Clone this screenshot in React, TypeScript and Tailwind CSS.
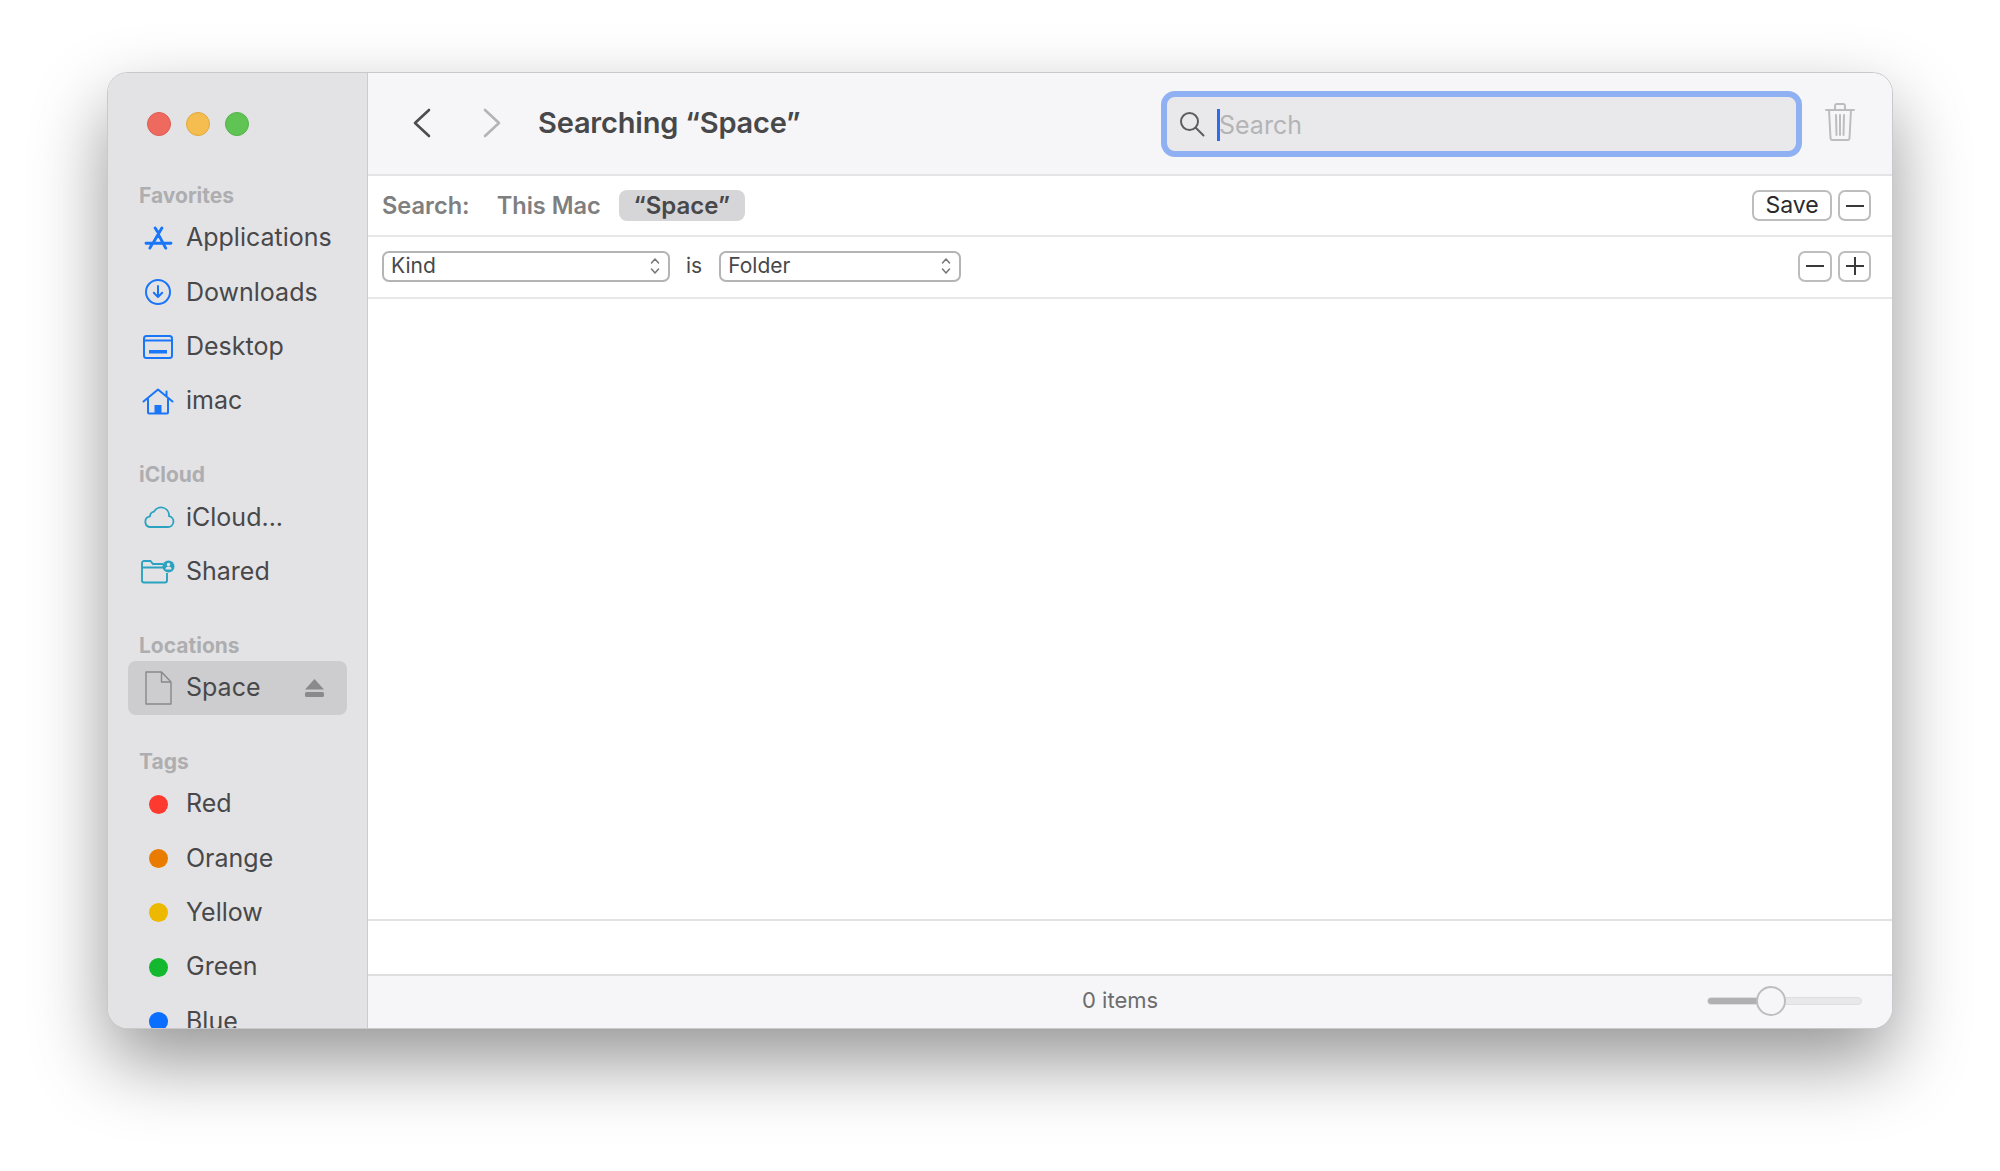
import { ReactNode } from 'react';

const font = { fontFamily: 'Inter, "Liberation Sans", sans-serif' };

function AppsIcon() {
  return (
    <svg width="29" height="25" viewBox="0 0 30 26" fill="none" stroke="#1a76f8" strokeWidth="3" strokeLinecap="round">
      <path d="M11.5 2l2.5 4M18.5 2L9.5 17.5M15 9l7.5 14M6 23l2-3.5M2 18h26" />
    </svg>
  );
}

function DownloadIcon() {
  return (
    <svg width="28" height="28" viewBox="0 0 28 28" fill="none" stroke="#1a76f8" strokeWidth="2" strokeLinecap="round" strokeLinejoin="round">
      <circle cx="14" cy="14" r="12" />
      <path d="M14 8v11M9.8 14.8L14 19l4.2-4.2" />
    </svg>
  );
}

function DesktopIcon() {
  return (
    <svg width="30" height="24" viewBox="0 0 30 24" fill="none">
      <rect x="1" y="1" width="28" height="22" rx="2.5" stroke="#1a76f8" strokeWidth="2" />
      <path d="M1 5.5h28" stroke="#1a76f8" strokeWidth="2" />
      <rect x="6" y="15" width="18" height="3.5" fill="#1a76f8" />
    </svg>
  );
}

function HomeIcon() {
  return (
    <svg width="32" height="27" viewBox="0 0 32 27" fill="none" stroke="#1a76f8" strokeWidth="2" strokeLinecap="round" strokeLinejoin="round">
      <path d="M1.5 13.5L16 1.5l14.5 12M24.5 8.5V3.5M6 11v13.5a1 1 0 001 1h18a1 1 0 001-1V11" />
      <rect x="12.5" y="17" width="7" height="8.5" fill="#1a76f8" stroke="none" />
    </svg>
  );
}

function CloudIcon() {
  return (
    <svg width="33" height="22" viewBox="0 0 33 22" fill="none" stroke="#2ba3c0" strokeWidth="1.8" strokeLinejoin="round">
      <path d="M7.5 21h18.5a5.5 5.5 0 001-10.9A8 8 0 0012 5.6 5 5 0 008 10.4 5.4 5.4 0 007.5 21z" />
    </svg>
  );
}

function SharedIcon() {
  return (
    <svg width="36" height="24" viewBox="0 0 36 24" fill="none">
      <path d="M2 6V3a2 2 0 012-2h6.5l2.5 3h10M2 7.5h22M2 6v14.5a2 2 0 002 2h21a2 2 0 002-2V13" stroke="#2ba3c0" strokeWidth="1.9" />
      <circle cx="28.5" cy="6.5" r="6" fill="#2ba3c0" />
      <circle cx="28.5" cy="4.5" r="1.7" fill="#e3e3e5" />
      <path d="M25.5 9.5a3 3 0 016 0z" fill="#e3e3e5" />
    </svg>
  );
}

function DocIcon() {
  return (
    <svg width="27" height="34" viewBox="0 0 27 34" fill="#cdcdcf" stroke="#88888a" strokeWidth="1.4" strokeLinejoin="round">
      <path d="M1 1h15.5L26 11v22H1z" />
      <path d="M16.5 1v10H26" fill="none" />
    </svg>
  );
}

function EjectIcon() {
  return (
    <svg width="19" height="18" viewBox="0 0 19 18" fill="#8a8a8c">
      <path d="M9.5 0L19 10.5H0z" />
      <rect y="13" width="19" height="5" rx="1.5" />
    </svg>
  );
}

function Dot({ color }: { color: string }) {
  return <span className={`block w-[19px] h-[19px] rounded-full ${color}`} />;
}

function Row({ icon, label, selected, trailing }: { icon: ReactNode; label: string; selected?: boolean; trailing?: ReactNode }) {
  return (
    <div className={`h-[54.3px] flex items-center rounded-[8px] mx-[20px] ${selected ? 'bg-[#cdcdcf]' : ''}`}>
      <span className="w-[60px] -mr-[2px] flex justify-center shrink-0">{icon}</span>
      <span className="text-[25px] text-[#48484a]">{label}</span>
      {trailing && <span className="ml-auto mr-[23px] flex">{trailing}</span>}
    </div>
  );
}

function Section({ title, children }: { title: string; children: ReactNode }) {
  return (
    <div>
      <div className="h-[24px] leading-[24px] pl-[31px] mb-[3px] text-[21px] font-bold text-[#aeaeb0]">{title}</div>
      {children}
    </div>
  );
}

function Sidebar() {
  return (
    <aside className="w-[260px] shrink-0 h-full overflow-hidden bg-[#e3e3e5] border-r border-[#cbcbcd]">
      <div className="flex items-center gap-[15px] pl-[39px] pt-[39px]">
        <span className="block w-[24px] h-[24px] rounded-full bg-[#ee695e] border border-[#dd5d53]" />
        <span className="block w-[24px] h-[24px] rounded-full bg-[#f5bd4f] border border-[#dfa93f]" />
        <span className="block w-[24px] h-[24px] rounded-full bg-[#5fc454] border border-[#52b348]" />
      </div>
      <div className="mt-[48px] flex flex-col gap-[35px]">
        <Section title="Favorites">
          <Row icon={<AppsIcon />} label="Applications" />
          <Row icon={<DownloadIcon />} label="Downloads" />
          <Row icon={<DesktopIcon />} label="Desktop" />
          <Row icon={<HomeIcon />} label="imac" />
        </Section>
        <Section title="iCloud">
          <Row icon={<CloudIcon />} label="iCloud..." />
          <Row icon={<SharedIcon />} label="Shared" />
        </Section>
        <Section title="Locations">
          <Row icon={<DocIcon />} label="Space" selected trailing={<EjectIcon />} />
        </Section>
        <Section title="Tags">
          <Row icon={<Dot color="bg-[#fc3a30]" />} label="Red" />
          <Row icon={<Dot color="bg-[#e97c00]" />} label="Orange" />
          <Row icon={<Dot color="bg-[#ecb800]" />} label="Yellow" />
          <Row icon={<Dot color="bg-[#14b82e]" />} label="Green" />
          <Row icon={<Dot color="bg-[#0a6eff]" />} label="Blue" />
        </Section>
      </div>
    </aside>
  );
}

function Toolbar() {
  return (
    <div className="h-[103px] shrink-0 flex items-center bg-[#f6f6f8] border-b-2 border-[#e4e4e6]">
      <svg className="ml-[44px] mb-[2px]" width="20" height="30" viewBox="0 0 20 30" fill="none" stroke="#4d4d4f" strokeWidth="2.6" strokeLinecap="round" strokeLinejoin="round">
        <path d="M17 2L3 15l14 13" />
      </svg>
      <svg className="ml-[50px] mb-[2px]" width="20" height="30" viewBox="0 0 20 30" fill="none" stroke="#b4b4b6" strokeWidth="2.6" strokeLinecap="round" strokeLinejoin="round">
        <path d="M3 2l14 13L3 28" />
      </svg>
      <h1 className="ml-[36px] mb-[1px] text-[29px] font-semibold text-[#48484a] tracking-[-0.2px]">Searching “Space”</h1>
      <div className="ml-auto w-[641px] h-[66px] rounded-[14px] border-[6px] border-[#8fb0f3] bg-[#e9e9eb] flex items-center">
        <svg className="ml-[12px] mt-[1px]" width="26" height="26" viewBox="0 0 26 26" fill="none" stroke="#5d5d5f" strokeWidth="2" strokeLinecap="round">
          <circle cx="10.5" cy="10.5" r="8.5" />
          <path d="M17 17l7.5 7.5" />
        </svg>
        <span className="ml-[12px] mt-[3px] w-[3px] h-[32px] bg-[#2f6bf0]" />
        <span className="-ml-[1px] mt-[5px] text-[25px] text-[#b4b4b6]">Search</span>
      </div>
      <svg className="ml-[23px] mr-[37px] mb-[4px]" width="30" height="38" viewBox="0 0 30 38" fill="none" stroke="#bdbdbf" strokeWidth="2" strokeLinejoin="round" strokeLinecap="round">
        <path d="M1 7h28M10 7V3a2 2 0 012-2h6a2 2 0 012 2v4M4 7l1.5 28a2 2 0 002 2h15a2 2 0 002-2L26 7M11 12l.5 20M15 12v20M19 12l-.5 20" />
      </svg>
    </div>
  );
}

function SmallBtn({ children, w }: { children: ReactNode; w: string }) {
  return (
    <button className={`${w} h-[31px] flex items-center justify-center bg-white rounded-[7px] border-2 border-[#bdbdbf] text-[23px] text-[#2a2a2c]`}>
      {children}
    </button>
  );
}

function Minus() {
  return <span className="block w-[18px] h-[2px] bg-[#3a3a3c]" />;
}

function Plus() {
  return (
    <svg width="20" height="20" viewBox="0 0 20 20" stroke="#3a3a3c" strokeWidth="2">
      <path d="M10 1v18M1 10h18" />
    </svg>
  );
}

function Stepper() {
  return (
    <svg className="ml-auto mr-[8px]" width="10" height="18" viewBox="0 0 10 18" fill="none" stroke="#77777a" strokeWidth="1.5" strokeLinecap="round" strokeLinejoin="round">
      <path d="M1.5 6L5 2l3.5 4M1.5 12L5 16l3.5-4" />
    </svg>
  );
}

function Select({ label, w }: { label: string; w: string }) {
  return (
    <div className={`${w} h-[31px] flex items-center rounded-[7px] border-2 border-[#b4b4b6] bg-white pl-[7px] text-[21px] text-[#48484a]`}>
      {label}
      <Stepper />
    </div>
  );
}

function SearchBar() {
  return (
    <div className="h-[61px] shrink-0 flex items-center pl-[14px] pr-[21px] border-b-2 border-[#e8e8ea] bg-white">
      <span className="text-[23.6px] font-semibold text-[#7f7f81]">Search:</span>
      <span className="ml-[27px] text-[23.6px] font-semibold text-[#7f7f81]">This Mac</span>
      <span className="ml-[18px] h-[31px] w-[126px] flex items-center justify-center rounded-[8px] bg-[#d6d6d8] text-[24px] font-semibold text-[#48484a]">“Space”</span>
      <div className="ml-auto flex items-center gap-[6px]">
        <SmallBtn w="w-[80px]">Save</SmallBtn>
        <SmallBtn w="w-[33px]"><Minus /></SmallBtn>
      </div>
    </div>
  );
}

function FilterRow() {
  return (
    <div className="h-[62px] shrink-0 flex items-center pl-[14px] pr-[21px] pb-[2px] border-b-2 border-[#e8e8ea] bg-white">
      <Select label="Kind" w="w-[288px]" />
      <span className="ml-[16px] text-[21px] text-[#48484a]">is</span>
      <span className="ml-[17px]"><Select label="Folder" w="w-[242px]" /></span>
      <div className="ml-auto flex items-center gap-[6px]">
        <SmallBtn w="w-[34px]"><Minus /></SmallBtn>
        <SmallBtn w="w-[33px]"><Plus /></SmallBtn>
      </div>
    </div>
  );
}

function Footer() {
  return (
    <div className="h-[54px] shrink-0 flex items-center pb-[3px] bg-[#f6f6f8] border-t-2 border-[#dedee0]">
      <span className="ml-[714px] text-[22px] text-[#6c6c6e]">0 items</span>
      <div className="ml-auto mr-[30px] relative w-[155px] h-[8px] rounded-full bg-[#e8e8ea] border border-[#dedee0]">
        <div className="w-[60px] h-full rounded-l-full bg-[#b0b0b2]" />
        <div className="absolute left-[48px] top-[-12px] w-[30px] h-[30px] rounded-full bg-[#f6f6f8] border-2 border-[#bdbdbf]" />
      </div>
    </div>
  );
}

export default function App() {
  return (
    <div className="w-[2000px] h-[1171px] bg-white pt-[73px] pl-[108px] overflow-hidden" style={font}>
      <div className="w-[1784px] h-[955px] flex overflow-hidden rounded-[20px] bg-white shadow-[0_0_0_1px_#c9c9cb,0_33px_75px_rgba(0,0,0,0.42)]">
        <Sidebar />
        <main className="flex-1 min-w-0 flex flex-col">
          <Toolbar />
          <SearchBar />
          <FilterRow />
          <div className="flex-1 bg-white border-b-2 border-[#e2e2e4]" />
          <div className="h-[53px] shrink-0 bg-white" />
          <Footer />
        </main>
      </div>
    </div>
  );
}
